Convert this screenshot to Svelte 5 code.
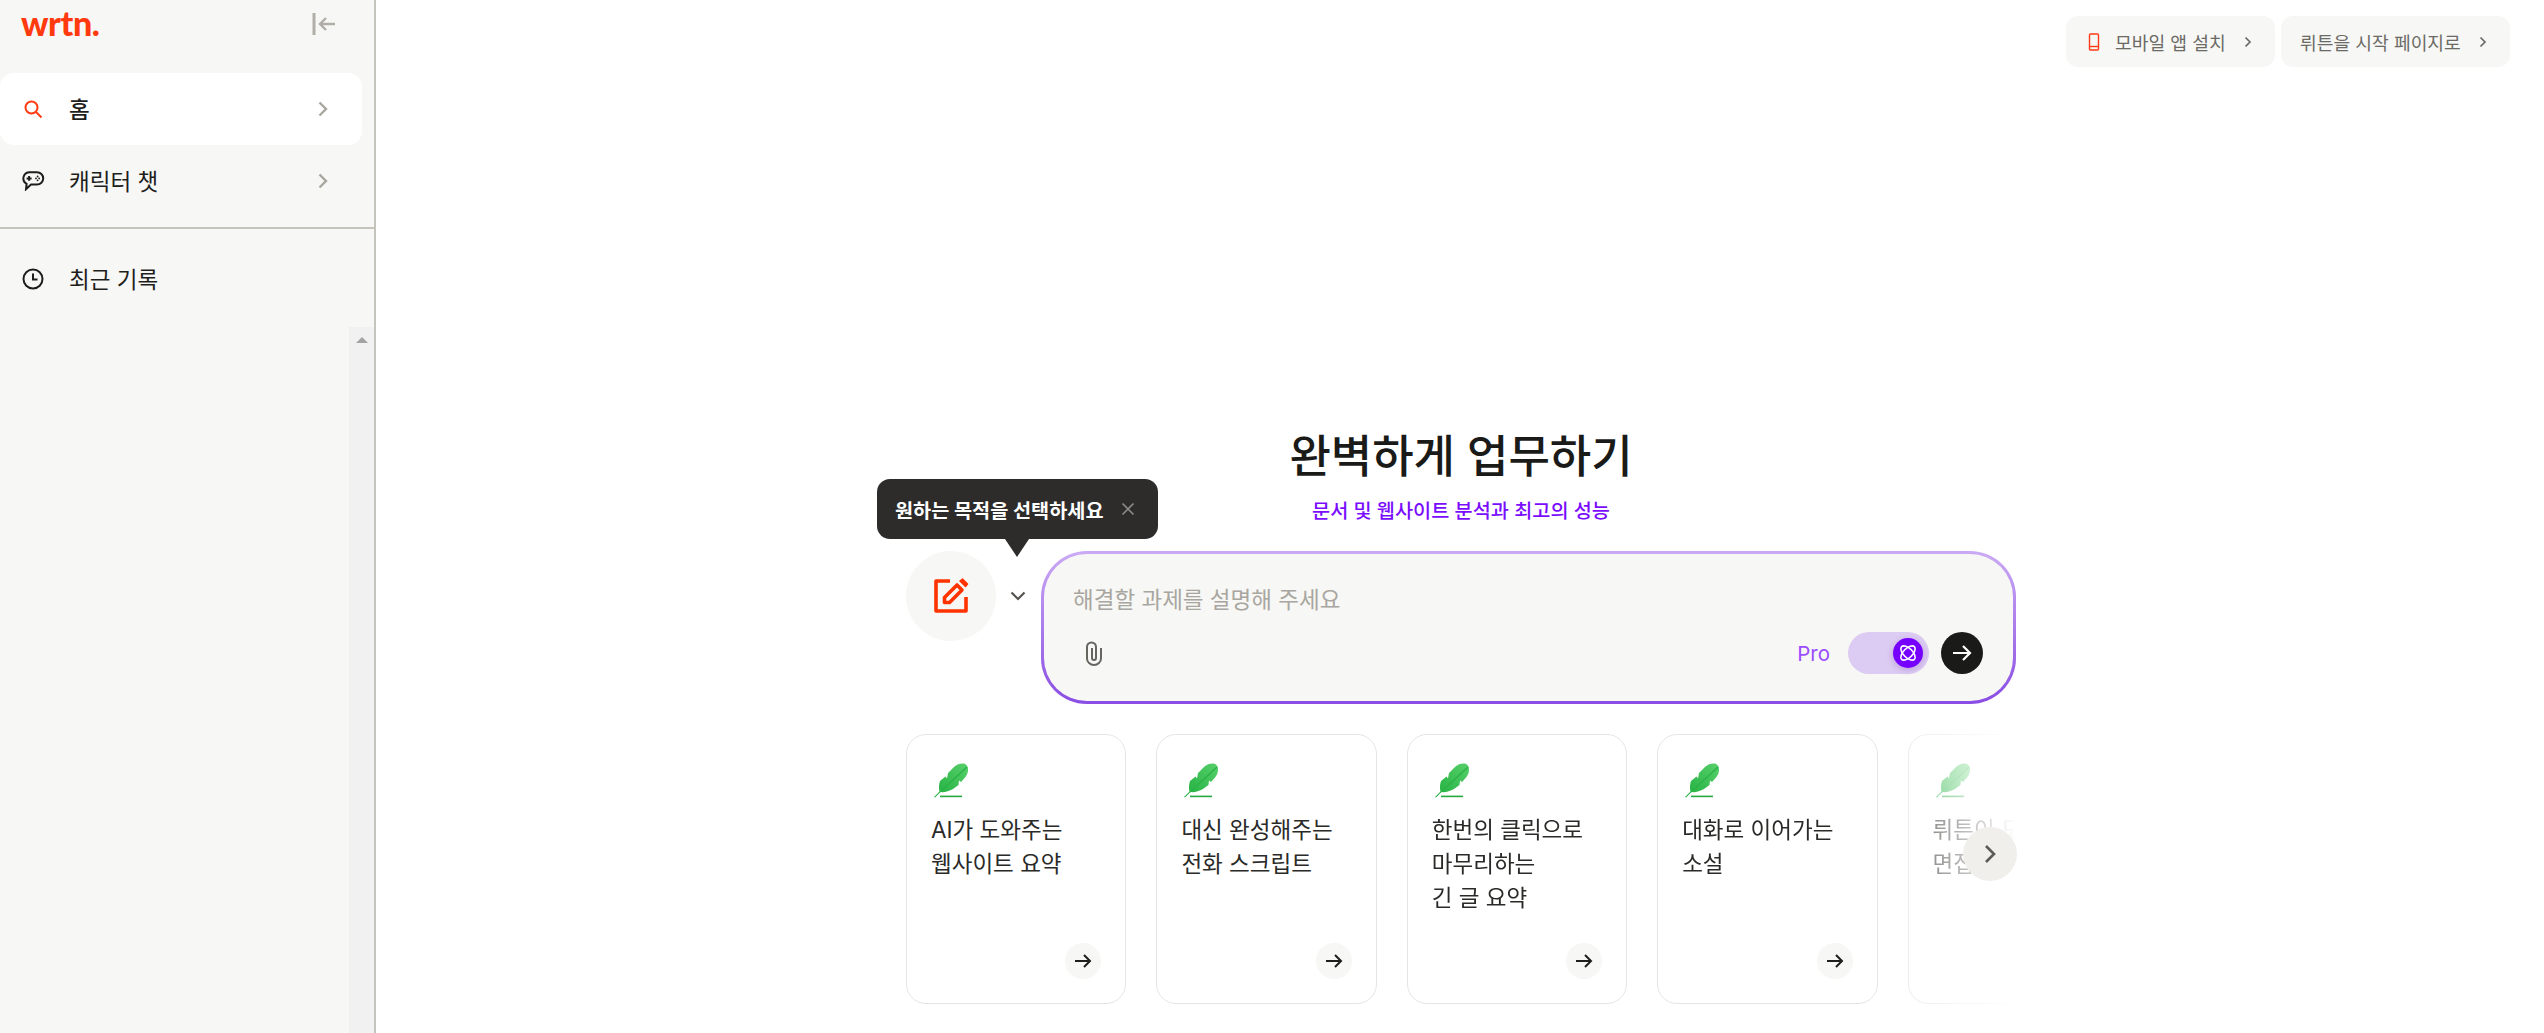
<script>
  const cards = [
    { lines: ["AI가 도와주는", "웹사이트 요약"] },
    { lines: ["대신 완성해주는", "전화 스크립트"] },
    { lines: ["한번의 클릭으로", "마무리하는", "긴 글 요약"] },
    { lines: ["대화로 이어가는", "소설"] },
    { lines: ["뤼튼이 도와주는", "면접 준비"] },
  ];
</script>

<div class="page">
  <aside class="sidebar">
    <div class="side-top">
      <span class="logo">wrtn.</span>
      <svg class="collapse" width="24" height="24" viewBox="0 0 24 24" fill="none" stroke="#b0aea6" stroke-width="2.4">
        <path d="M2 1v22" stroke-width="3" />
        <path d="M23 12H8M14 6l-6 6 6 6" />
      </svg>
    </div>

    <nav class="nav">
      <div class="nav-item active">
        <svg width="20" height="20" viewBox="0 0 20 20" fill="none" stroke="#ff3b14" stroke-width="2">
          <circle cx="8.5" cy="8.5" r="6" />
          <path d="M13 13l5.500 5.500" />
        </svg>
        <span class="nav-label">홈</span>
        <svg class="nav-chev" width="10" height="16" viewBox="0 0 10 16" fill="none" stroke="#a8a69f" stroke-width="2.400"><path d="M1.500 1.500L8 8l-6.500 6.500" /></svg>
      </div>
      <div class="nav-item">
        <svg width="22" height="20" viewBox="0 0 22 20" fill="none" stroke="#1e1e1c" stroke-width="2">
          <path d="M7 1.200h8a6 6 0 0 1 0 12.400H9l-5 4.600.6-5.400A6.200 6.200 0 0 1 7 1.200z" />
          <path d="M4.600 7.400h5M7.100 5v4.800" />
          <circle cx="14" cy="7.400" r=".9" fill="#1e1e1c" stroke="none" />
          <circle cx="17.200" cy="7.400" r=".9" fill="#1e1e1c" stroke="none" />
          <circle cx="15.600" cy="5.500" r=".9" fill="#1e1e1c" stroke="none" />
          <circle cx="15.600" cy="9.300" r=".9" fill="#1e1e1c" stroke="none" />
        </svg>
        <span class="nav-label">캐릭터 챗</span>
        <svg class="nav-chev" width="10" height="16" viewBox="0 0 10 16" fill="none" stroke="#a8a69f" stroke-width="2.400"><path d="M1.500 1.500L8 8l-6.500 6.500" /></svg>
      </div>
    </nav>

    <div class="divider"></div>

    <div class="nav-item recent">
      <svg width="22" height="22" viewBox="0 0 22 22" fill="none" stroke="#1e1e1c" stroke-width="2">
        <circle cx="11" cy="11" r="9.500" />
        <path d="M11 5.500V11.500H15.500" />
      </svg>
      <span class="nav-label">최근 기록</span>
    </div>

    <div class="scroll-track">
      <span class="scroll-up"></span>
    </div>
  </aside>

  <main class="main">
    <div class="topbar">
      <button class="top-btn one">
        <svg width="12" height="18" viewBox="0 0 12 18" fill="none" stroke="#ff3b14" stroke-width="1.400">
          <rect x="1.500" y="1" width="9" height="16" rx="1" />
          <path d="M1.500 13.500h9" />
        </svg>
        <span class="top-label">모바일 앱 설치</span>
        <svg class="top-chev" width="8" height="12" viewBox="0 0 8 12" fill="none" stroke="#6b6a65" stroke-width="1.700"><path d="M1.500 1.500L6 6l-4.500 4.500" /></svg>
      </button>
      <button class="top-btn two">
        <span class="top-label">뤼튼을 시작 페이지로</span>
        <svg class="top-chev" width="8" height="12" viewBox="0 0 8 12" fill="none" stroke="#6b6a65" stroke-width="1.700"><path d="M1.500 1.500L6 6l-4.500 4.500" /></svg>
      </button>
    </div>

    <section class="content">
      <h1>완벽하게 업무하기</h1>
      <p class="sub">문서 및 웹사이트 분석과 최고의 성능</p>

      <div class="prompt-row">
        <div class="tooltip">
          <span>원하는 목적을 선택하세요</span>
          <svg width="14" height="14" viewBox="0 0 14 14" fill="none" stroke="#8d8c88" stroke-width="1.600"><path d="M1.500 1.500l11 11M12.500 1.500l-11 11" /></svg>
          <i class="tip-arrow"></i>
        </div>

        <div class="mode">
          <svg width="36" height="36" viewBox="0 0 36 36" fill="none" stroke="#ff3300" stroke-width="3.600" stroke-linejoin="round">
            <path d="M17 3H3v30h30V19" />
            <path d="M11.500 19.500L24 7l5 5-12.500 12.500h-5z" />
            <path d="M27 3l2.500-2 5 5-2 2.500z" fill="#ff3300" stroke-width="1.500" />
          </svg>
        </div>
        <svg class="mode-chev" width="16" height="10" viewBox="0 0 16 10" fill="none" stroke="#555450" stroke-width="2.200"><path d="M1.500 1.500L8 8l6.500-6.500" /></svg>

        <div class="prompt">
          <div class="placeholder">해결할 과제를 설명해 주세요</div>
          <div class="prompt-bottom">
            <svg class="clip" width="18" height="25" viewBox="0 0 18 25" fill="none" stroke="#666560" stroke-width="2">
              <path d="M16 7v10.500a7 6.500 0 0 1-14 0V6a4.500 4.500 0 0 1 9 0v11a2 2 0 0 1-4 0V7" />
            </svg>
            <span class="pro">Pro</span>
            <div class="toggle">
              <div class="knob">
                <svg width="20" height="20" viewBox="0 0 20 20" fill="none" stroke="#fff" stroke-width="1.600">
                  <ellipse cx="10" cy="10" rx="9" ry="4.600" transform="rotate(45 10 10)" />
                  <ellipse cx="10" cy="10" rx="9" ry="4.600" transform="rotate(-45 10 10)" />
                </svg>
              </div>
            </div>
            <div class="send">
              <svg width="22" height="20" viewBox="0 0 22 20" fill="none" stroke="#fff" stroke-width="2.200"><path d="M2 10h17M12 3l7 7-7 7" /></svg>
            </div>
          </div>
        </div>
      </div>

      <div class="carousel">
        <div class="cards">
          {#each cards as card}
            <div class="card">
              <svg class="feather" width="35" height="35" viewBox="0 0 35 35">
                <defs>
                  <linearGradient id="fea" x1="1" y1="0" x2="0" y2="1">
                    <stop offset="0" stop-color="#58d06b" />
                    <stop offset="1" stop-color="#1fae3e" />
                  </linearGradient>
                </defs>
                <path d="M0 34L5.500 28.500C4.500 25 5 21 6 18L11.500 13.500 13 15.500 14 10 20 4C23 1 27 0 30 0.500 33 1.500 34.500 4.500 34 8 33.500 12 30.500 15.500 27 19L25 17.500 24.500 22 19 26C15 28.500 10 29.500 6.500 29L1 34.500z" fill="url(#fea)" />
                <path d="M6 29L33 4" stroke="#2cb348" stroke-width="1.500" fill="none" />
                <rect x="6" y="32.600" width="22" height="1.600" fill="#27a83f" />
              </svg>
              <div class="card-text">
                {#each card.lines as line}
                  <div>{line}</div>
                {/each}
              </div>
              <div class="card-go">
                <svg width="18" height="16" viewBox="0 0 18 16" fill="none" stroke="#1e1e1c" stroke-width="2"><path d="M1 8h15M10 2l6 6-6 6" /></svg>
              </div>
            </div>
          {/each}
        </div>
        <div class="next">
          <svg width="12" height="20" viewBox="0 0 12 20" fill="none" stroke="#5b5a56" stroke-width="2.600"><path d="M2 2l8 8-8 8" /></svg>
        </div>
      </div>
    </section>
  </main>
</div>

<style>
  :global(body) {
    margin: 0;
    background: #fff;
  }
  .page {
    display: flex;
    height: 1033px;
    overflow: hidden;
    font-family: Inter, "Noto Sans CJK KR", sans-serif;
    color: #1e1e1c;
  }

  .sidebar {
    width: 376px;
    flex: none;
    box-sizing: border-box;
    background: #f7f7f5;
    border-right: 2px solid #c6c5bd;
    display: flex;
    flex-direction: column;
  }
  .side-top {
    height: 73px;
    flex: none;
    display: flex;
    justify-content: space-between;
    align-items: flex-start;
    padding: 0 38px 0 21px;
  }
  .logo {
    font-family: Lato, sans-serif;
    font-size: 34px;
    font-weight: 900;
    line-height: 46px;
    letter-spacing: -0.4px;
    color: #ff3a0e;
  }
  .collapse {
    margin-top: 12px;
  }
  .nav-item {
    height: 72px;
    display: flex;
    align-items: center;
    padding: 0 34px 0 21px;
    font-size: 22.5px;
  }
  .nav-item.active {
    background: #fff;
    border-radius: 14px;
    font-weight: 500;
  }
  .nav {
    width: 362px;
  }
  .nav-item svg:first-child {
    flex: none;
    width: 24px;
  }
  .nav-label {
    margin-left: 24px;
    padding-bottom: 3px;
    flex: 1;
  }
  .nav-chev {
    flex: none;
  }
  .divider {
    height: 2px;
    background: #c6c5bd;
    margin-top: 10px;
  }
  .recent {
    margin-top: 14px;
  }
  .scroll-track {
    flex: 1;
    align-self: flex-end;
    width: 25px;
    margin-top: 12px;
    background: #f1f1f1;
    display: flex;
    justify-content: center;
    padding-top: 10px;
  }
  .scroll-up {
    width: 0;
    height: 0;
    border-left: 6px solid transparent;
    border-right: 6px solid transparent;
    border-bottom: 6px solid #a3a3a3;
  }

  .main {
    flex: 1;
    display: flex;
    flex-direction: column;
    padding-left: 2px;
    padding-bottom: 29px;
    min-width: 0;
  }
  .topbar {
    display: flex;
    justify-content: flex-end;
    gap: 6px;
    padding: 16px 34px 0 0;
  }
  .top-btn {
    height: 51px;
    border: none;
    border-radius: 12px;
    background: #f7f7f5;
    display: flex;
    align-items: center;
    font-family: inherit;
    font-size: 18.2px;
    color: #6b6a65;
    padding: 0;
  }
  .top-btn.one {
    width: 209px;
    padding-left: 22px;
  }
  .top-btn.two {
    width: 229px;
    padding-left: 19px;
  }
  .top-btn.one .top-label {
    margin-left: 15px;
  }
  .top-chev {
    margin-left: 18px;
  }

  .content {
    width: 1110px;
    margin: auto auto 0;
    display: flex;
    flex-direction: column;
  }
  h1 {
    margin: 0;
    font-size: 45px;
    font-weight: 500;
    line-height: 54px;
    text-align: center;
    color: #1a1a18;
  }
  .sub {
    margin: 13px 0 0;
    font-size: 19.7px;
    font-weight: 500;
    line-height: 28px;
    text-align: center;
    color: #7a0cff;
  }

  .prompt-row {
    position: relative;
    display: flex;
    align-items: flex-start;
    margin-top: 26px;
  }
  .tooltip {
    position: absolute;
    left: -29px;
    top: -72px;
    width: 281px;
    height: 60px;
    box-sizing: border-box;
    padding: 0 23px 0 18px;
    display: flex;
    align-items: center;
    justify-content: space-between;
    background: #2d2c2b;
    border-radius: 13px;
    color: #fff;
    font-size: 19.7px;
    font-weight: 700;
  }
  .tip-arrow {
    position: absolute;
    left: 128px;
    top: 60px;
    width: 0;
    height: 0;
    border-left: 12px solid transparent;
    border-right: 12px solid transparent;
    border-top: 18px solid #2d2c2b;
  }
  .mode {
    width: 90px;
    height: 90px;
    flex: none;
    border-radius: 50%;
    background: #f7f7f5;
    display: flex;
    align-items: center;
    justify-content: center;
  }
  .mode-chev {
    flex: none;
    margin: 40px 15px 0 14px;
  }
  .prompt {
    flex: 1;
    height: 153px;
    box-sizing: border-box;
    border: 3px solid transparent;
    border-radius: 46px;
    background:
      linear-gradient(#f7f7f5, #f7f7f5) padding-box,
      linear-gradient(180deg, #cbaaf4, #8a4de4) border-box;
    padding: 27px 30px 0 29px;
  }
  .placeholder {
    font-size: 22.5px;
    line-height: 38px;
    color: #a8a69f;
  }
  .prompt-bottom {
    display: flex;
    align-items: center;
    margin-top: 13px;
  }
  .clip {
    margin-left: 12px;
    margin-right: auto;
  }
  .pro {
    font-size: 20.5px;
    line-height: 26px;
    padding-top: 2px;
    color: #9b4dff;
    margin-right: 18px;
  }
  .toggle {
    width: 81px;
    height: 42px;
    border-radius: 21px;
    background: #dccbf2;
    display: flex;
    align-items: center;
    justify-content: flex-end;
    padding-right: 6px;
    box-sizing: border-box;
  }
  .knob {
    width: 30px;
    height: 30px;
    border-radius: 50%;
    background: #7600ff;
    box-shadow: 0 2px 6px rgba(90, 30, 160, 0.25);
    display: flex;
    align-items: center;
    justify-content: center;
  }
  .send {
    width: 42px;
    height: 42px;
    margin-left: 12px;
    border-radius: 50%;
    background: #1a1a18;
    display: flex;
    align-items: center;
    justify-content: center;
  }

  .carousel {
    position: relative;
    margin-top: 30px;
  }
  .cards {
    display: flex;
    gap: 30px;
    overflow: hidden;
    -webkit-mask-image: linear-gradient(90deg, #000 0, #000 978px, rgba(0, 0, 0, 0.55) 1020px, transparent 1110px);
    mask-image: linear-gradient(90deg, #000 0, #000 978px, rgba(0, 0, 0, 0.55) 1020px, transparent 1110px);
  }
  .card {
    position: relative;
    flex: none;
    width: 220.4px;
    height: 270px;
    box-sizing: border-box;
    border: 1.5px solid #e6e5e3;
    border-radius: 20px;
    padding: 28px 24px 0;
    background: #fff;
  }
  .feather {
    display: block;
    margin-left: 3px;
  }
  .card-text {
    margin-top: 14.500px;
    font-size: 22.5px;
    line-height: 34px;
    color: #2a2a28;
    white-space: nowrap;
  }
  .card-go {
    position: absolute;
    right: 24px;
    bottom: 24px;
    width: 36px;
    height: 36px;
    border-radius: 50%;
    background: #f7f7f5;
    display: flex;
    align-items: center;
    justify-content: center;
  }
  .next {
    position: absolute;
    left: 1057px;
    top: 93px;
    width: 54px;
    height: 54px;
    border-radius: 50%;
    background: #f0efec;
    display: flex;
    align-items: center;
    justify-content: center;
  }
</style>
